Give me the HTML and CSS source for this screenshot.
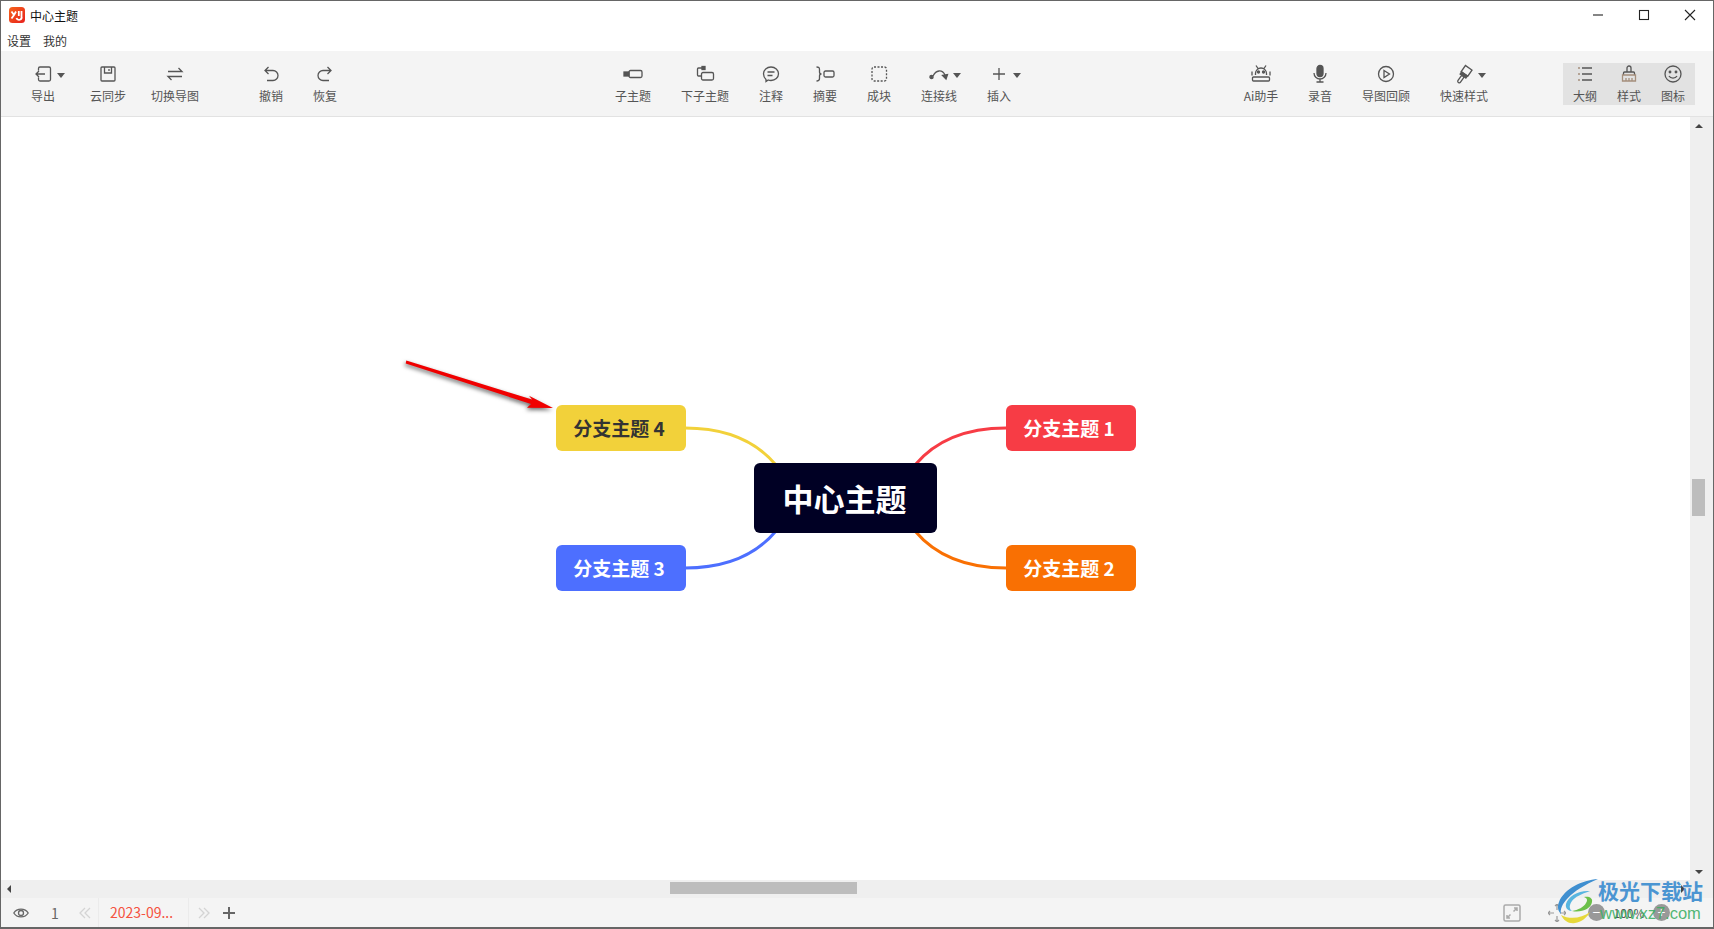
FILE: index.html
```html
<!DOCTYPE html>
<html lang="zh-CN">
<head>
    <meta charset="UTF-8">
    <title>中心主题</title>
    <link rel="stylesheet" href="styles.css">
</head>
<body>
    <div class="app">
        <header class="titlebar">
            <div class="title-row">
                <svg class="logo" viewBox="0 0 16 16">
                    <defs>
                        <linearGradient id="logoFill" x1="0" y1="0" x2="1" y2="1">
                            <stop offset="0" stop-color="#f5651c"/>
                            <stop offset="1" stop-color="#e81f1c"/>
                        </linearGradient>
                    </defs>
                    <rect width="16" height="16" rx="3.500" fill="url(#logoFill)"/>
                    <path d="M2.500 4.500l2.500 3.500-2.500 3.500M7 4.500l-2 3.500M12.500 4v5.500a2.500 2.500 0 0 1-5 1.500M9.800 4v5" fill="none" stroke="#fff" stroke-width="1.800"/>
                </svg>
                <span class="doc-name">中心主题</span>
                <div class="win-btns">
                    <svg viewBox="0 0 12 12"><path d="M1 6h10"/></svg>
                    <svg viewBox="0 0 12 12"><rect x="1.500" y="1.500" width="9" height="9"/></svg>
                    <svg viewBox="0 0 12 12"><path d="M1 1l10 10M11 1L1 11"/></svg>
                </div>
            </div>
            <nav class="menu">
                <span>设置</span>
                <span>我的</span>
            </nav>
        </header>

        <div class="toolbar">
            <div class="tool-group group-left">
                <div class="tool w54">
                    <div class="tool-icon">
                        <svg viewBox="0 0 20 20"><path d="M5.500 6.500V4.500A1.500 1.500 0 0 1 7 3h9a1.500 1.500 0 0 1 1.500 1.500v11A1.500 1.500 0 0 1 16 17H7a1.500 1.500 0 0 1-1.500-1.500v-2M12 10H3M6 7l-3 3 3 3"/></svg>
                        <i class="caret"></i>
                    </div>
                    <span>导出</span>
                </div>
                <div class="tool w76">
                    <div class="tool-icon"><svg viewBox="0 0 20 20"><path d="M4 3h12a1 1 0 0 1 1 1v12a1 1 0 0 1-1 1H4a1 1 0 0 1-1-1V4a1 1 0 0 1 1-1zM6.500 3v6h7V3M11 5v2"/></svg></div>
                    <span>云同步</span>
                </div>
                <div class="tool w58">
                    <div class="tool-icon"><svg viewBox="0 0 20 20"><path d="M3 7.500h14L13.500 4M17 12.500H3L6.500 16"/></svg></div>
                    <span>切换导图</span>
                </div>
                <div class="tool w54 after-gap">
                    <div class="tool-icon"><svg viewBox="0 0 20 20"><path d="M7.500 3L4 6.500 7.500 10M4 6.500h8a5 5 0 0 1 0 10H6"/></svg></div>
                    <span>撤销</span>
                </div>
                <div class="tool w54">
                    <div class="tool-icon"><svg viewBox="0 0 20 20"><path d="M12.500 3L16 6.500 12.500 10M16 6.500H8a5 5 0 0 0 0 10h6"/></svg></div>
                    <span>恢复</span>
                </div>
            </div>

            <div class="tool-group group-mid">
                <div class="tool w66">
                    <div class="tool-icon"><svg viewBox="0 0 20 20"><rect class="solid" x="1" y="8" width="5" height="4"/><rect x="6" y="6.500" width="13" height="7" rx="1.500"/></svg></div>
                    <span>子主题</span>
                </div>
                <div class="tool w78">
                    <div class="tool-icon"><svg viewBox="0 0 20 20"><rect class="solid" x="7" y="2.500" width="3" height="3"/><path d="M8 4H3.500A1 1 0 0 0 2.500 5v6a1 1 0 0 0 1 1H6"/><rect x="6.500" y="8.500" width="12" height="7.500" rx="1.500"/></svg></div>
                    <span>下子主题</span>
                </div>
                <div class="tool w54">
                    <div class="tool-icon"><svg viewBox="0 0 20 20"><path d="M5 15.500C3.500 14 2.500 12 2.500 9.800 2.500 6 5.800 3 10 3s7.500 3 7.500 6.800-3.300 6.700-7.500 6.700c-1 0-2-.2-2.800-.5L5 17.500zM6.500 8h7M6.500 11.500h5"/></svg></div>
                    <span>注释</span>
                </div>
                <div class="tool w54">
                    <div class="tool-icon"><svg viewBox="0 0 20 20"><path d="M1.500 3q3 0 3 2.500V8q0 2 2 2-2 0-2 2v2.500q0 2.500-3 2.500"/><rect x="9" y="7" width="10" height="6" rx="1.500"/></svg></div>
                    <span>摘要</span>
                </div>
                <div class="tool w54">
                    <div class="tool-icon"><svg viewBox="0 0 20 20"><rect class="dashed" x="3" y="3" width="14.500" height="14" rx="2"/></svg></div>
                    <span>成块</span>
                </div>
                <div class="tool w66">
                    <div class="tool-icon">
                        <svg viewBox="0 0 20 20"><circle class="solid" cx="2.500" cy="13" r="1.600"/><path d="M4 12c3-6 9-7 12-1"/><path class="solid" d="M13.500 11.500l5-1-1.500 4.500z"/></svg>
                        <i class="caret"></i>
                    </div>
                    <span>连接线</span>
                </div>
                <div class="tool w54">
                    <div class="tool-icon">
                        <svg viewBox="0 0 20 20"><path d="M10 4v12M4 10h12"/></svg>
                        <i class="caret"></i>
                    </div>
                    <span>插入</span>
                </div>
            </div>

            <div class="tool-group group-right">
                <div class="tool w66">
                    <div class="tool-icon"><svg viewBox="0 0 20 20"><path d="M5 1.500L7 4.500M15 1.500L13 4.500M4.500 11V9.500a5.500 5.500 0 0 1 11 0V11M2.500 13h15a1 1 0 0 1 1 1v2a1 1 0 0 1-1 1h-15a1 1 0 0 1-1-1v-2a1 1 0 0 1 1-1zM1 7.500v4M19 7.500v4"/><circle class="solid" cx="7.500" cy="8" r="1"/><circle class="solid" cx="12.500" cy="8" r="1"/></svg></div>
                    <span>Ai助手</span>
                </div>
                <div class="tool w52">
                    <div class="tool-icon"><svg viewBox="0 0 20 20"><rect class="solid" x="7" y="1.500" width="6" height="11" rx="3"/><path d="M4 9a6 6 0 0 0 12 0M10 15v3M6.500 18h7"/></svg></div>
                    <span>录音</span>
                </div>
                <div class="tool w80">
                    <div class="tool-icon"><svg viewBox="0 0 20 20"><circle cx="10" cy="10" r="7.500"/><path d="M8 6.500l5.500 3.500L8 13.500z"/></svg></div>
                    <span>导图回顾</span>
                </div>
                <div class="tool w76">
                    <div class="tool-icon">
                        <svg viewBox="0 0 20 20"><g transform="translate(-1 2) rotate(35 10 10)"><rect x="6" y="0" width="8" height="7.500"/><rect class="solid" x="6.500" y="7.500" width="7" height="2.500"/><rect x="8.500" y="10" width="3" height="8" rx="1.500"/></g></svg>
                        <i class="caret"></i>
                    </div>
                    <span>快速样式</span>
                </div>
                <div class="tool-active">
                    <div class="tool w44">
                        <div class="tool-icon"><svg viewBox="0 0 20 20"><path class="tint" d="M3 4h2M3 10h2M3 16h2"/><path d="M7 4h10M7 10h10M7 16h10"/></svg></div>
                        <span>大纲</span>
                    </div>
                    <div class="tool w44">
                        <div class="tool-icon"><svg viewBox="0 0 20 20"><path d="M8 8V4a2 2 0 0 1 4 0v4M4.500 11V9a1 1 0 0 1 1-1h9a1 1 0 0 1 1 1v2"/><path class="tint" d="M3.500 11h13v6h-13zM7 14v3M10 14v3M13 14v3"/></svg></div>
                        <span>样式</span>
                    </div>
                    <div class="tool w44">
                        <div class="tool-icon"><svg viewBox="0 0 20 20"><circle cx="10" cy="10" r="8"/><circle class="solid" cx="7" cy="8" r=".8"/><circle class="solid" cx="13" cy="8" r=".8"/><path d="M6 12c1.500 2.800 6.500 2.800 8 0"/></svg></div>
                        <span>图标</span>
                    </div>
                </div>
            </div>
        </div>

        <div class="workspace">
            <main class="canvas">
                <svg class="links" viewBox="0 0 1689 762">
                    <path stroke="#f2d13a" d="M684 311C724 311 754 323 775 348"/>
                    <path stroke="#4d6fff" d="M684 451C724 451 754 439 775 414"/>
                    <path stroke="#f73c45" d="M1005 311C965 311 935 323 914 348"/>
                    <path stroke="#f97003" d="M1005 451C965 451 935 439 914 414"/>
                    <polygon class="arrow" points="405.300,243.500 531,282.500 528,278.700 552,291 526,290.700 530,287 404.700,246.500"/>
                </svg>
                <div class="node node-center">中心主题</div>
                <div class="node branch branch-1">分支主题 1</div>
                <div class="node branch branch-2">分支主题 2</div>
                <div class="node branch branch-3">分支主题 3</div>
                <div class="node branch branch-4">分支主题 4</div>
            </main>
            <aside class="vscroll">
                <i class="arrow-up"></i>
                <div class="vthumb"></div>
                <i class="arrow-down"></i>
            </aside>
        </div>

        <div class="hscroll">
            <i class="arrow-left"></i>
            <div class="hthumb"></div>
            <i class="arrow-right"></i>
        </div>

        <footer class="statusbar">
            <svg class="eye" viewBox="0 0 16 12"><path d="M.8 6C4 .8 12 .8 15.200 6 12 11.200 4 11.200 .8 6z"/><circle cx="8" cy="6" r="2.500"/></svg>
            <span class="page-num">1</span>
            <svg class="chev" viewBox="0 0 12 12"><path d="M6 1L1 6l5 5M11 1L6 6l5 5"/></svg>
            <div class="sheet-tab">2023-09...</div>
            <svg class="chev" viewBox="0 0 12 12"><path d="M1 1l5 5-5 5M6 1l5 5-5 5"/></svg>
            <svg class="add" viewBox="0 0 12 12"><path d="M6 0v12M0 6h12"/></svg>
            <div class="status-right">
                <svg class="fit" viewBox="0 0 18 18"><rect x="1" y="1" width="16" height="16" rx="1.500"/><path d="M10.500 7.500L14 4M11 4h3v3M7.500 10.500L4 14M4 11v3h3"/></svg>
                <svg class="center-btn" viewBox="0 0 18 18"><path d="M9 0v6M9 12v6M0 9h6M12 9h6M7 2l2-2 2 2M7 16l2 2 2-2M2 7L0 9l2 2M16 7l2 2-2 2"/></svg>
                <i class="zoom-btn">−</i>
                <span class="zoom-val">100%</span>
                <i class="zoom-btn">+</i>
            </div>
        </footer>

        <div class="watermark">
            <svg class="wm-logo" viewBox="0 0 42 50">
                <path fill="#3f8fd0" d="M41 1C25 2 7 11 2 24c-2 5-1 9 2 12C2 27 13 13 41 1z"/>
                <path fill="#58b5e0" d="M33 13C22 12 11 18 9 26c-1 4 2 7 6 7-3-2-3-6 0-10 3-4 9-7 18-10z"/>
                <path fill="#6cc04a" d="M15 33c9 2 19-2 20-9 1-4-3-6-8-5 3 1 4 3 2 6-2 4-8 7-14 8z"/>
                <path fill="#e6d83a" d="M4 37c3 6 8 9 14 8 6-1 12-5 15-11-8 6-20 8-29 3z"/>
            </svg>
            <div class="wm-text">
                <div class="wm-cn">极光下载站</div>
                <div class="wm-url">www.xz7.com</div>
            </div>
        </div>
    </div>
</body>
</html>
```

FILE: styles.css
```css
* {
    box-sizing: border-box;
}

body {
    margin: 0;
    font-family: "Noto Sans CJK SC", "Noto Sans", sans-serif;
    background-color: #fff;
}

.app {
    position: relative;
    width: 1714px;
    height: 929px;
    border: 1px solid #666;
    border-bottom-width: 2px;
    display: flex;
    flex-direction: column;
    overflow: hidden;
}

/* title bar */
.titlebar {
    height: 50px;
    background-color: #fff;
    flex-shrink: 0;
}

.title-row {
    display: flex;
    align-items: center;
    height: 28px;
    padding-left: 8px;
}

.logo {
    width: 16px;
    height: 16px;
}

.doc-name {
    margin-left: 5px;
    font-size: 12px;
    color: #111;
}

.win-btns {
    margin-left: auto;
    display: flex;
    gap: 34px;
    padding-right: 17px;
}

.win-btns svg {
    width: 12px;
    height: 12px;
    fill: none;
    stroke: #222;
    stroke-width: 1.100;
}

.menu {
    display: flex;
    gap: 12px;
    padding: 3px 0 0 6px;
    font-size: 12px;
    line-height: 18px;
    color: #333;
}

/* toolbar */
.toolbar {
    display: flex;
    align-items: flex-start;
    height: 66px;
    padding: 12px 0 0 15px;
    background-color: #f4f4f4;
    border-bottom: 1px solid #e2e2e2;
    flex-shrink: 0;
}

.tool-group {
    display: flex;
}

.group-mid {
    margin-left: 248px;
}

.group-right {
    margin-left: 202px;
}

.after-gap {
    margin-left: 40px;
}

.tool-active {
    display: flex;
    margin-left: 61px;
    background-color: #e2e2e2;
}

.tool {
    display: flex;
    flex-direction: column;
    align-items: center;
    height: 42px;
    font-size: 12px;
    line-height: 16px;
    color: #555;
}

.w44 { width: 44px; }
.w52 { width: 52px; }
.w54 { width: 54px; }
.w58 { width: 58px; }
.w66 { width: 66px; }
.w76 { width: 76px; }
.w78 { width: 78px; }
.w80 { width: 80px; }

.tool-icon {
    position: relative;
    width: 20px;
    height: 20px;
    margin: 1px 0 4px;
}

.tool-icon svg {
    display: block;
    width: 20px;
    height: 20px;
    fill: none;
    stroke: #555;
    stroke-width: 1.300;
}

.tool-icon .solid {
    fill: #555;
}

.tool-icon .dashed {
    stroke-dasharray: 2 1.500;
}

.tool-icon .tint {
    stroke: #a58f7c;
}

.caret {
    position: absolute;
    left: 24px;
    top: 9px;
    border-left: 4px solid transparent;
    border-right: 4px solid transparent;
    border-top: 5px solid #555;
}

/* canvas */
.workspace {
    flex: 1;
    display: flex;
    min-height: 0;
}

.canvas {
    position: relative;
    flex: 1;
    background-color: #fff;
}

.links {
    position: absolute;
    left: 0;
    top: 0;
    width: 1689px;
    height: 762px;
}

.links path {
    fill: none;
    stroke-width: 3;
}

.arrow {
    fill: #f00000;
    filter: drop-shadow(-1px 2px 2px rgba(0, 0, 0, 0.6));
}

.node {
    position: absolute;
    display: flex;
    align-items: center;
    justify-content: center;
    font-weight: 700;
    color: #fff;
    border-radius: 6px;
}

.node-center {
    left: 753px;
    top: 346px;
    width: 183px;
    height: 70px;
    padding: 0 2px 2px 0;
    font-size: 31px;
    background-color: #000024;
}

.branch {
    width: 130px;
    height: 46px;
    padding: 0 4px 2px 0;
    font-size: 19px;
}

.branch-1 {
    left: 1005px;
    top: 288px;
    background-color: #f73c45;
}

.branch-2 {
    left: 1005px;
    top: 428px;
    background-color: #f97003;
}

.branch-3 {
    left: 555px;
    top: 428px;
    background-color: #4d6fff;
}

.branch-4 {
    left: 555px;
    top: 288px;
    color: #333;
    background-color: #f2d13a;
}

/* scrollbars */
.vscroll {
    position: relative;
    width: 23px;
    background-color: #efefef;
    flex-shrink: 0;
}

.arrow-up,
.arrow-down,
.arrow-left,
.arrow-right {
    position: absolute;
    width: 0;
    height: 0;
}

.arrow-up {
    top: 7px;
    left: 5px;
    border-left: 4px solid transparent;
    border-right: 4px solid transparent;
    border-bottom: 4px solid #444;
}

.arrow-down {
    bottom: 6px;
    left: 5px;
    border-left: 4px solid transparent;
    border-right: 4px solid transparent;
    border-top: 4px solid #444;
}

.vthumb {
    width: 13px;
    height: 37px;
    margin: 362px 0 0 2px;
    background-color: #bdbdbd;
}

.hscroll {
    position: relative;
    height: 18px;
    padding: 2px 0 0 669px;
    background-color: #efefef;
    flex-shrink: 0;
}

.hthumb {
    width: 187px;
    height: 12px;
    background-color: #bdbdbd;
}

.arrow-left {
    top: 5px;
    left: 6px;
    border-top: 4px solid transparent;
    border-bottom: 4px solid transparent;
    border-right: 4px solid #444;
}

.arrow-right {
    top: 5px;
    right: 28px;
    border-top: 4px solid transparent;
    border-bottom: 4px solid transparent;
    border-left: 4px solid #444;
}

/* status bar */
.statusbar {
    display: flex;
    align-items: center;
    height: 29px;
    padding-left: 12px;
    background-color: #f4f4f4;
    flex-shrink: 0;
}

.eye {
    width: 16px;
    height: 12px;
    fill: none;
    stroke: #666;
    stroke-width: 1.300;
}

.page-num {
    margin-left: 22px;
    width: 28px;
    font-size: 14px;
    color: #666;
}

.chev {
    width: 12px;
    height: 12px;
    fill: none;
    stroke: #d4d4d4;
    stroke-width: 1.300;
}

.sheet-tab {
    margin: 0 9px 0 7px;
    padding: 0 15px 0 11px;
    height: 29px;
    line-height: 29px;
    font-size: 14px;
    color: #f5523f;
    border-left: 1px solid #ebebeb;
    border-right: 1px solid #ebebeb;
}

.add {
    margin-left: 13px;
    width: 12px;
    height: 12px;
    fill: none;
    stroke: #666;
    stroke-width: 2;
}

.status-right {
    margin-left: auto;
    display: flex;
    align-items: center;
    padding-right: 43px;
}

.fit {
    width: 18px;
    height: 18px;
    fill: none;
    stroke: #aaa;
    stroke-width: 1.500;
}

.center-btn {
    margin-left: 27px;
    width: 18px;
    height: 18px;
    fill: none;
    stroke: #999;
    stroke-width: 1.200;
}

.zoom-btn {
    width: 17px;
    height: 17px;
    border-radius: 50%;
    background-color: #999;
    color: #fff;
    font-style: normal;
    font-size: 14px;
    line-height: 17px;
    text-align: center;
}

.center-btn + .zoom-btn {
    margin-left: 22px;
}

.zoom-val {
    width: 48px;
    font-size: 12px;
    text-align: center;
    color: #555;
}

/* watermark over the status bar */
.watermark {
    position: absolute;
    left: 1556px;
    top: 877px;
    display: flex;
    pointer-events: none;
}

.wm-logo {
    width: 42px;
    height: 50px;
}

.wm-text {
    margin-left: -1px;
    white-space: nowrap;
}

.wm-cn {
    font-size: 21px;
    font-weight: 700;
    line-height: 25px;
    color: #4b95d2;
}

.wm-url {
    margin-left: 2px;
    font-size: 16.500px;
    line-height: 20px;
    color: rgba(60, 175, 100, 0.9);
    font-family: "Liberation Sans", sans-serif;
}
```
